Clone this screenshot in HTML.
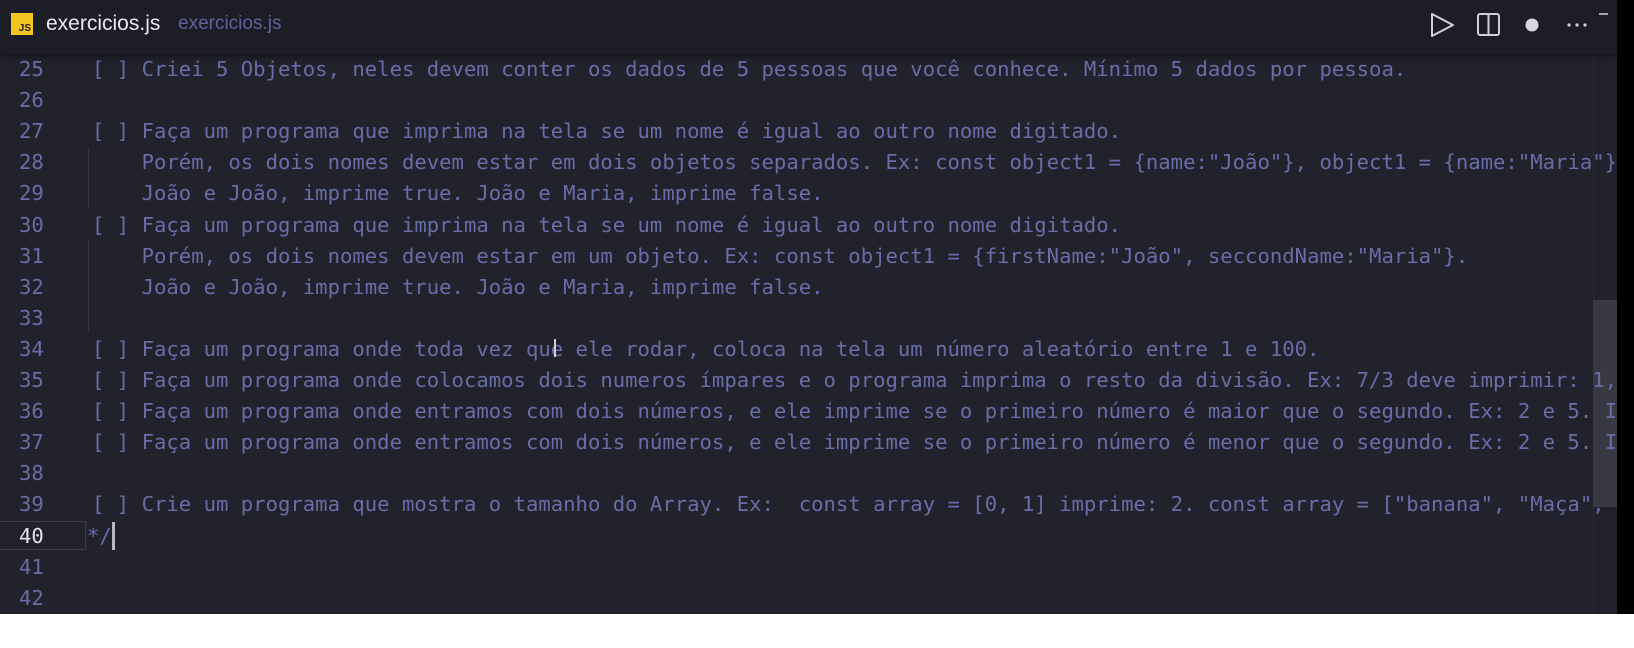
<!DOCTYPE html>
<html><head><meta charset="utf-8"><style>
html,body{margin:0;padding:0;width:1634px;height:648px;background:#fff;overflow:hidden}
#ed{position:absolute;left:0;top:0;width:1617px;height:614px;background:#22222d;overflow:hidden}
#blk{position:absolute;left:1617px;top:0;width:17px;height:614px;background:#000}
#hdr{position:absolute;left:0;top:0;width:1617px;height:54px;background:#1d1d27;box-shadow:0 2px 6px rgba(0,0,0,.5);z-index:2}
.js{position:absolute;left:11px;top:13px;width:22px;height:22px;background:#f2c521;font:bold 10px "Liberation Sans",sans-serif;color:#222;}
.js span{position:absolute;right:2px;bottom:1px}
.t1{position:absolute;left:46px;top:12px;font:21px "Liberation Sans",sans-serif;color:#e8e8ee}
.t2{position:absolute;left:178px;top:13px;font:19px "Liberation Sans",sans-serif;color:#5e6399}
.code{position:absolute;left:0;top:54px;font:20.6px/31.1px "DejaVu Sans Mono",monospace;color:#686da6;white-space:pre}
.ln{position:absolute;left:19px;width:40px}
.tx{position:absolute;left:92px}
.cur{position:absolute;left:0;top:521px;width:86px;height:29px;border:1px solid #3d3d4a;border-left:none;box-sizing:border-box}
.guide{position:absolute;left:88px;width:1px;background:#34344a}
#sb{position:absolute;left:1593px;top:300px;width:24px;height:207px;background:#393944}
#sbl{position:absolute;left:1593px;top:54px;width:1px;height:560px;background:#2b2b38}
</style></head><body>
<div id="ed">
<div id="hdr">
<div class="js"><span>JS</span></div>
<div class="t1">exercicios.js</div>
<div class="t2">exercicios.js</div>
<svg style="position:absolute;left:0;top:0" width="1617" height="54">
<path d="M1432 14 L1453 25 L1432 36 Z" fill="none" stroke="#cfcfd6" stroke-width="2" stroke-linejoin="round"/>
<rect x="1478" y="14" width="21" height="21" rx="2" fill="none" stroke="#cfcfd6" stroke-width="2"/>
<line x1="1488.5" y1="14" x2="1488.5" y2="35" stroke="#cfcfd6" stroke-width="2"/>
<circle cx="1532" cy="25" r="6.5" fill="#d6d6dc"/>
<circle cx="1569" cy="25" r="1.6" fill="#cfcfd6"/><circle cx="1577" cy="25" r="1.6" fill="#cfcfd6"/><circle cx="1585" cy="25" r="1.6" fill="#cfcfd6"/>
<line x1="1599" y1="14" x2="1608" y2="14" stroke="#cfcfd6" stroke-width="1.5"/>
</svg>
</div>
<div id="sbl"></div>
<div id="sb"></div>
<div class="cur"></div>
<div class="guide" style="top:147px;height:62px"></div>
<div class="guide" style="top:240px;height:93px"></div>
<div class="code">
<div class="ln" style="top:0">25</div>
<div class="ln" style="top:31.1px">26</div>
<div class="ln" style="top:62.2px">27</div>
<div class="ln" style="top:93.3px">28</div>
<div class="ln" style="top:124.4px">29</div>
<div class="ln" style="top:155.5px">30</div>
<div class="ln" style="top:186.6px">31</div>
<div class="ln" style="top:217.7px">32</div>
<div class="ln" style="top:248.8px">33</div>
<div class="ln" style="top:279.9px">34</div>
<div class="ln" style="top:311px">35</div>
<div class="ln" style="top:342.1px">36</div>
<div class="ln" style="top:373.2px">37</div>
<div class="ln" style="top:404.3px">38</div>
<div class="ln" style="top:435.4px">39</div>
<div class="ln" style="top:466.5px;color:#e4e4ea">40</div>
<div class="ln" style="top:497.6px">41</div>
<div class="ln" style="top:528.7px">42</div>
<div class="tx" style="top:0">[ ] Criei 5 Objetos, neles devem conter os dados de 5 pessoas que você conhece. Mínimo 5 dados por pessoa.</div>
<div class="tx" style="top:62.2px">[ ] Faça um programa que imprima na tela se um nome é igual ao outro nome digitado.</div>
<div class="tx" style="top:93.3px">    Porém, os dois nomes devem estar em dois objetos separados. Ex: const object1 = {name:"João"}, object1 = {name:"Maria"}</div>
<div class="tx" style="top:124.4px">    João e João, imprime true. João e Maria, imprime false.</div>
<div class="tx" style="top:155.5px">[ ] Faça um programa que imprima na tela se um nome é igual ao outro nome digitado.</div>
<div class="tx" style="top:186.6px">    Porém, os dois nomes devem estar em um objeto. Ex: const object1 = {firstName:"João", seccondName:"Maria"}.</div>
<div class="tx" style="top:217.7px">    João e João, imprime true. João e Maria, imprime false.</div>
<div class="tx" style="top:279.9px">[ ] Faça um programa onde toda vez que ele rodar, coloca na tela um número aleatório entre 1 e 100.</div>
<div class="tx" style="top:311px">[ ] Faça um programa onde colocamos dois numeros ímpares e o programa imprima o resto da divisão. Ex: 7/3 deve imprimir: 1,</div>
<div class="tx" style="top:342.1px">[ ] Faça um programa onde entramos com dois números, e ele imprime se o primeiro número é maior que o segundo. Ex: 2 e 5. I</div>
<div class="tx" style="top:373.2px">[ ] Faça um programa onde entramos com dois números, e ele imprime se o primeiro número é menor que o segundo. Ex: 2 e 5. I</div>
<div class="tx" style="top:435.4px">[ ] Crie um programa que mostra o tamanho do Array. Ex:  const array = [0, 1] imprime: 2. const array = ["banana", "Maça",</div>
<div class="tx" style="top:466.5px;left:87px">*/</div>
</div>
<div style="position:absolute;left:112px;top:522px;width:3px;height:28px;background:#b8b8c0"></div>
<div style="position:absolute;left:554px;top:339px;width:2px;height:18px;background:#d0d0d8"></div>
</div>
<div id="blk"></div>
</body></html>
